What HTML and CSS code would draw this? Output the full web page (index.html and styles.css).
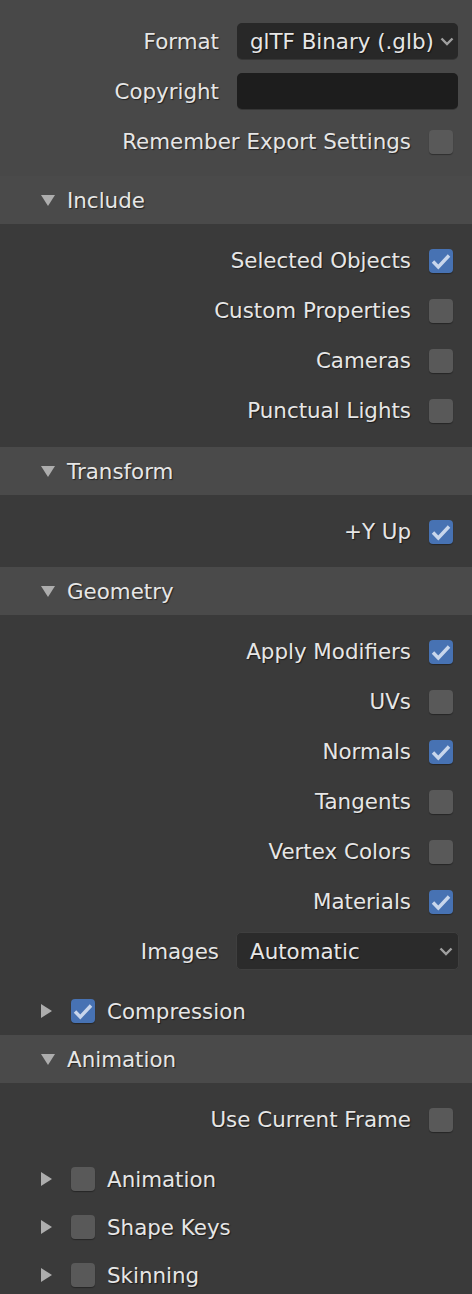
FILE: index.html
```html
<!DOCTYPE html>
<html>
<head>
<meta charset="utf-8">
<link rel="stylesheet" href="styles.css">
</head>
<body>
<div class="panel">
  <div class="top">
    <div class="row field-row">
      <span class="flabel">Format</span>
      <div class="select dark1"><span>glTF Binary (.glb)</span><svg class="chev" viewBox="0 0 14 9" width="14" height="9"><polyline points="1.5,1.5 7,7 12.5,1.5" fill="none" stroke="#a0a0a0" stroke-width="2.4"/></svg></div>
    </div>
    <div class="row field-row">
      <span class="flabel">Copyright</span>
      <div class="text-input"></div>
    </div>
    <div class="row">
      <span class="label">Remember Export Settings</span>
      <span class="cb"></span>
    </div>
  </div>

  <div class="hdr"><span class="tri-down"></span>Include</div>
  <div class="body b-include">
    <div class="row"><span class="label">Selected Objects</span><span class="cb on"><svg viewBox="0 0 24 24"><polyline points="4,12.5 9.3,18 20,6.5" fill="none" stroke="#c8d6ec" stroke-width="3.4"/></svg></span></div>
    <div class="row"><span class="label">Custom Properties</span><span class="cb"></span></div>
    <div class="row"><span class="label">Cameras</span><span class="cb"></span></div>
    <div class="row"><span class="label">Punctual Lights</span><span class="cb"></span></div>
  </div>

  <div class="hdr"><span class="tri-down"></span>Transform</div>
  <div class="body b-transform">
    <div class="row"><span class="label">+Y Up</span><span class="cb on"><svg viewBox="0 0 24 24"><polyline points="4,12.5 9.3,18 20,6.5" fill="none" stroke="#c8d6ec" stroke-width="3.4"/></svg></span></div>
  </div>

  <div class="hdr"><span class="tri-down"></span>Geometry</div>
  <div class="body b-geometry">
    <div class="row"><span class="label">Apply Modifiers</span><span class="cb on"><svg viewBox="0 0 24 24"><polyline points="4,12.5 9.3,18 20,6.5" fill="none" stroke="#c8d6ec" stroke-width="3.4"/></svg></span></div>
    <div class="row"><span class="label">UVs</span><span class="cb"></span></div>
    <div class="row"><span class="label">Normals</span><span class="cb on"><svg viewBox="0 0 24 24"><polyline points="4,12.5 9.3,18 20,6.5" fill="none" stroke="#c8d6ec" stroke-width="3.4"/></svg></span></div>
    <div class="row"><span class="label">Tangents</span><span class="cb"></span></div>
    <div class="row"><span class="label">Vertex Colors</span><span class="cb"></span></div>
    <div class="row"><span class="label">Materials</span><span class="cb on"><svg viewBox="0 0 24 24"><polyline points="4,12.5 9.3,18 20,6.5" fill="none" stroke="#c8d6ec" stroke-width="3.4"/></svg></span></div>
    <div class="row field-row">
      <span class="flabel">Images</span>
      <div class="select dark2"><span>Automatic</span><svg class="chev" viewBox="0 0 14 9" width="14" height="9"><polyline points="1.5,1.5 7,7 12.5,1.5" fill="none" stroke="#a0a0a0" stroke-width="2.4"/></svg></div>
    </div>
    <div class="sub"><span class="tri-right"></span><span class="cb small on"><svg viewBox="0 0 24 24"><polyline points="4,12.5 9.3,18 20,6.5" fill="none" stroke="#c8d6ec" stroke-width="3.4"/></svg></span><span class="sublabel">Compression</span></div>
  </div>

  <div class="hdr"><span class="tri-down"></span>Animation</div>
  <div class="body b-animation">
    <div class="row"><span class="label">Use Current Frame</span><span class="cb"></span></div>
    <div class="sub"><span class="tri-right"></span><span class="cb small"></span><span class="sublabel">Animation</span></div>
    <div class="sub"><span class="tri-right"></span><span class="cb small"></span><span class="sublabel">Shape Keys</span></div>
    <div class="sub"><span class="tri-right"></span><span class="cb small"></span><span class="sublabel">Skinning</span></div>
  </div>
</div>
</body>
</html>
```

FILE: styles.css
```css
html, body {
  margin: 0;
  padding: 0;
  background: #3a3a3a;
}
body {
  width: 472px;
  height: 1294px;
  overflow: hidden;
  font-family: "DejaVu Sans", sans-serif;
  font-size: 21.4px;
  color: #e6e6e6;
}
.panel {
  display: flex;
  flex-direction: column;
}
.top {
  background: #484848;
  padding: 16px 0 10px;
}
.row {
  height: 50px;
  display: flex;
  align-items: center;
}
.label, .flabel, .hdr, .sublabel, .select span {
  text-shadow: 1px 1px 1px rgba(0,0,0,0.55);
  white-space: nowrap;
}
.label {
  flex: 1;
  text-align: right;
}
.flabel {
  width: 219px;
  text-align: right;
  flex: none;
}
.select, .text-input {
  margin-left: 18px;
  width: 221px;
  height: 36px;
  border-radius: 5px;
  box-sizing: border-box;
  display: flex;
  align-items: center;
}
.select {
  padding: 0 4px 0 13px;
  justify-content: space-between;
}
.dark1 {
  background: #282828;
  box-shadow: 0 1px 0 rgba(0,0,0,0.25);
}
.dark2 {
  background: #2b2b2b;
  border: 1px solid #3f3f3f;
  height: 38px;
  width: 223px;
  margin-left: 17px;
  padding-right: 5px;
}
.text-input {
  background: #1d1d1d;
  box-shadow: 0 1px 0 rgba(0,0,0,0.25);
}
.chev {
  flex: none;
}
.cb {
  flex: none;
  width: 24px;
  height: 24px;
  border-radius: 4px;
  background: #595959;
  margin: 2px 19px 0 18px;
  box-shadow: 0 1px 1px rgba(0,0,0,0.35);
  display: flex;
}
.cb svg {
  width: 24px;
  height: 24px;
}
.cb.on {
  background: #4772b3;
}
.hdr {
  height: 48px;
  background: #4a4a4a;
  display: flex;
  align-items: center;
  padding-left: 41px;
}
.tri-down {
  width: 0;
  height: 0;
  border-left: 7.5px solid transparent;
  border-right: 7.5px solid transparent;
  border-top: 11px solid #adadad;
  margin-right: 12px;
  margin-top: 1px;
}
.tri-right {
  width: 0;
  height: 0;
  border-top: 7px solid transparent;
  border-bottom: 7px solid transparent;
  border-left: 11px solid #adadad;
  margin-right: 19px;
}
.body {
  background: #3a3a3a;
  padding-top: 11px;
}
.b-include { padding-bottom: 12px; }
.b-transform { padding-bottom: 11px; }
.sub {
  height: 48px;
  display: flex;
  align-items: center;
  padding-left: 41px;
}
.b-geometry .sub, .b-animation .row + .sub {
  margin-top: 11px;
}
.cb.small {
  margin: 0 12px 0 0;
}
```
